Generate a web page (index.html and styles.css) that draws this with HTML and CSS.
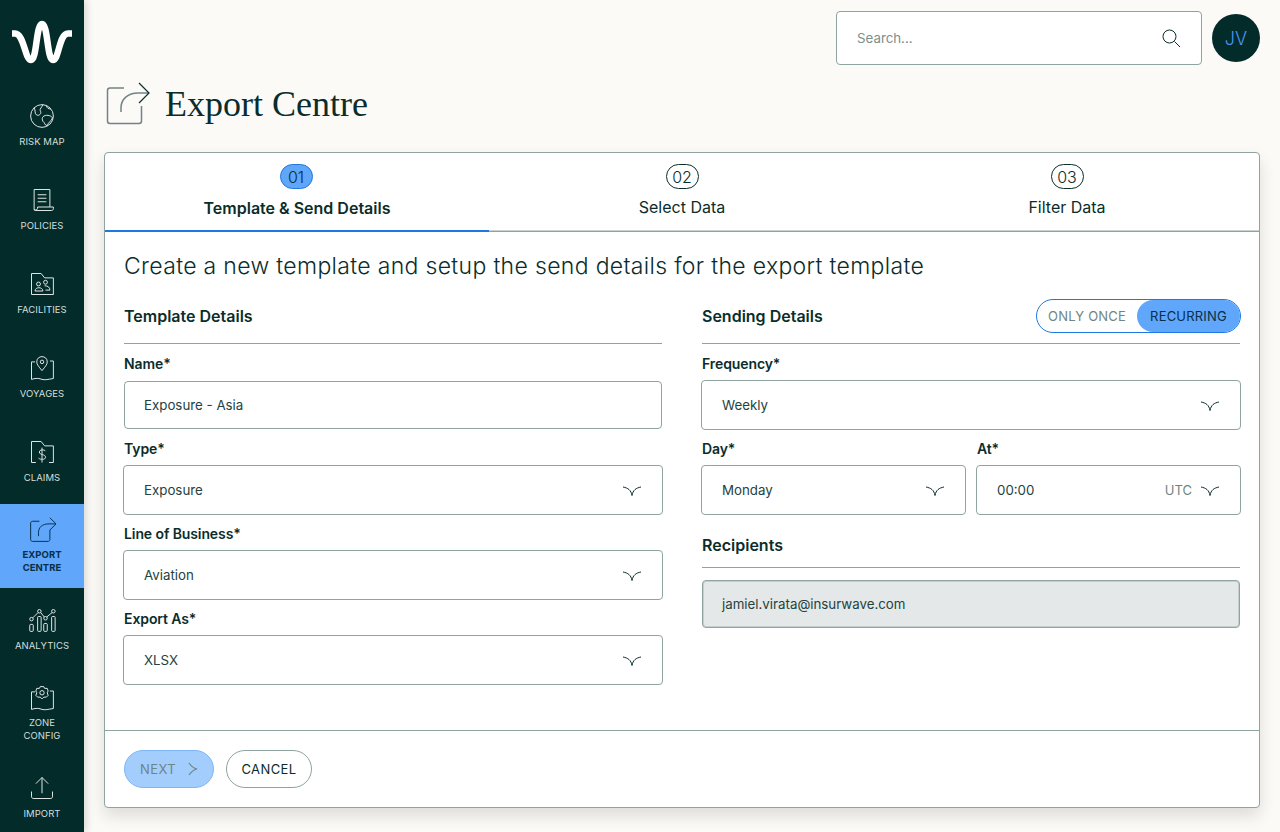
FILE: index.html
```html
<!DOCTYPE html>
<html lang="en">
<head>
    <meta charset="UTF-8">
    <title>Export Centre</title>
    <link rel="stylesheet" href="styles.css">
</head>
<body>
    <aside class="sidebar">
        <div class="logo">
            <svg width="60" height="44" viewBox="0 0 60 44" fill="none"><path d="M0 13.500 H3 C12 13.500 13 40 19 40 C25 40 24 4 30 4 C36 4 35 40 41 40 C47 40 47 13.500 56 13.500 H60" stroke="#fff" stroke-width="6.500"/></svg>
        </div>
        <a class="nav-item">
            <svg class="nav-icon" viewBox="0 0 32 32"><circle cx="16" cy="16" r="13"/><path d="M7 6.500 C9 10 7 13 10 15 C13 16 16 13 14 10 C13 8 16 6 17 3"/><path d="M17 17 C20 14 26 15 28 18 C27 22 23 23 22 27 C19 27 19 23 17 22 C16 20 16 18 17 17Z"/><path d="M21 4 C21 7 24 8 26 8"/></svg>
            <span>Risk Map</span>
        </a>
        <a class="nav-item">
            <svg class="nav-icon" viewBox="0 0 32 32"><path d="M7 27 V4 H25 V24"/><path d="M11 10 H21 M11 14 H21 M11 18 H21"/><path d="M7 27 C10 28 11 27 11 24 H29 V26 C29 27 28 28 27 28 H9 C8 28 7 28 7 27Z"/></svg>
            <span>Policies</span>
        </a>
        <a class="nav-item">
            <svg class="nav-icon" viewBox="0 0 32 32"><path d="M4 4 H15 L19 9 H29 V28 H4Z"/><circle cx="12" cy="16" r="2.200"/><circle cx="20" cy="14" r="2.200"/><path d="M8 24 C8 19 17 19 17 24Z"/><path d="M19 18 C23 18 25 20 25 23 H20"/></svg>
            <span>Facilities</span>
        </a>
        <a class="nav-item">
            <svg class="nav-icon" viewBox="0 0 32 32"><path d="M16 19 C12 14 10 12 10 9 C10 5 13 3 16 3 C19 3 22 5 22 9 C22 12 20 14 16 19Z"/><circle cx="16" cy="9" r="2"/><path d="M8 9 H4 V29 C10 27 13 28 16 29 C19 30 23 29 29 28 V8 H25"/></svg>
            <span>Voyages</span>
        </a>
        <a class="nav-item">
            <svg class="nav-icon" viewBox="0 0 32 32"><path d="M9 28 H4 V4 H15 L19 9 H29 V28 H24"/><path d="M20 15 C19 13 13 13 13 16 C13 20 20 18 20 22 C20 25 14 25 12 23"/><path d="M16 11 V28"/></svg>
            <span>Claims</span>
        </a>
        <a class="nav-item two-line active">
            <svg class="nav-icon" viewBox="0 0 32 32"><path d="M13 6 H5 C4 6 3 7 3 8 V27 C3 28 4 29 5 29 H23 C24 29 25 28 25 27 V16"/><path d="M12 23 V19 C12 13 16 9 24 9 H32"/><path d="M25 2 L32 9 L25 16"/></svg>
            <span>Export Centre</span>
        </a>
        <a class="nav-item">
            <svg class="nav-icon" viewBox="0 0 32 32"><circle cx="4" cy="15" r="2"/><circle cx="13" cy="6" r="2"/><circle cx="20" cy="14" r="2"/><circle cx="29" cy="6" r="2"/><path d="M5.500 13.500 L11.500 7.500 M14.500 7.500 L18.500 12.500 M21.500 12.500 L27.500 7.500"/><rect x="2" y="21" width="4" height="8" rx="1"/><rect x="11" y="12" width="4" height="17" rx="1"/><rect x="18" y="20" width="4" height="9" rx="1"/><rect x="27" y="12" width="4" height="17" rx="1"/></svg>
            <span>Analytics</span>
        </a>
        <a class="nav-item two-line">
            <svg class="nav-icon" viewBox="0 0 32 32"><path d="M8 9 H4 V29 C10 27 13 28 16 29 C19 30 23 29 29 28 V8 H25"/><circle cx="16" cy="10" r="2.500"/><path d="M14 3 H18 L19 5 L22 5 L23 8 L22 10 L23 13 L21 15 L18 15 L16 17 L14 15 L11 15 L9 13 L10 10 L9 8 L10 5 L13 5Z"/></svg>
            <span>Zone Config</span>
        </a>
        <a class="nav-item">
            <svg class="nav-icon" viewBox="0 0 32 32"><path d="M16 22 V4 M9 11 L16 4 L23 11"/><path d="M4 20 V26 C4 27 5 28 6 28 H26 C27 28 28 27 28 26 V20"/></svg>
            <span>Import</span>
        </a>
    </aside>

    <main class="main">
        <header class="topbar">
            <div class="search">
                <span>Search...</span>
                <svg width="20" height="20" viewBox="0 0 20 20" fill="none" stroke="#0a2d2b"><circle cx="8.500" cy="8.500" r="6.500"/><path d="M13.500 13.500 L19 19"/></svg>
            </div>
            <div class="avatar">JV</div>
        </header>

        <div class="page-title">
            <svg width="44" height="44" viewBox="0 0 44 44" fill="none"><path d="M18 6 H4 C2.500 6 1.500 7 1.500 8.500 V39 C1.500 40.500 2.500 41.500 4 41.500 H33 C34.500 41.500 35.500 40.500 35.500 39 V24" stroke="#6f8583" stroke-width="1.500"/><path d="M15 30 V26 C15 17 22 11 32 11 H43" stroke="#6f8583" stroke-width="1.500"/><path d="M33 1 L43 11 L33 21" stroke="#0a2d2b" stroke-width="1.200"/></svg>
            <h1>Export Centre</h1>
        </div>

        <section class="card">
            <nav class="tabs">
                <div class="tab current"><span class="pill">01</span><span class="tab-label">Template &amp; Send Details</span></div>
                <div class="tab"><span class="pill">02</span><span class="tab-label">Select Data</span></div>
                <div class="tab"><span class="pill">03</span><span class="tab-label">Filter Data</span></div>
            </nav>

            <div class="card-body">
                <h2>Create a new template and setup the send details for the export template</h2>
                <div class="columns">
                    <div class="col">
                        <div class="section-head"><h3>Template Details</h3></div>
                        <div class="field">
                            <label>Name*</label>
                            <div class="box plain">Exposure - Asia</div>
                        </div>
                        <div class="field">
                            <label>Type*</label>
                            <div class="box">Exposure
                                <svg class="chev" viewBox="0 0 18 11"><path d="M0 2 C5 3 8 5 9 10.500 C10 5 13 3 18 2"/></svg>
                            </div>
                        </div>
                        <div class="field">
                            <label>Line of Business*</label>
                            <div class="box">Aviation
                                <svg class="chev" viewBox="0 0 18 11"><path d="M0 2 C5 3 8 5 9 10.500 C10 5 13 3 18 2"/></svg>
                            </div>
                        </div>
                        <div class="field">
                            <label>Export As*</label>
                            <div class="box">XLSX
                                <svg class="chev" viewBox="0 0 18 11"><path d="M0 2 C5 3 8 5 9 10.500 C10 5 13 3 18 2"/></svg>
                            </div>
                        </div>
                    </div>

                    <div class="col">
                        <div class="section-head">
                            <h3>Sending Details</h3>
                            <div class="toggle">
                                <span class="opt">ONLY ONCE</span>
                                <span class="opt on">RECURRING</span>
                            </div>
                        </div>
                        <div class="field">
                            <label>Frequency*</label>
                            <div class="box">Weekly
                                <svg class="chev" viewBox="0 0 18 11"><path d="M0 2 C5 3 8 5 9 10.500 C10 5 13 3 18 2"/></svg>
                            </div>
                        </div>
                        <div class="field-row">
                            <div class="field">
                                <label>Day*</label>
                                <div class="box">Monday
                                    <svg class="chev" viewBox="0 0 18 11"><path d="M0 2 C5 3 8 5 9 10.500 C10 5 13 3 18 2"/></svg>
                                </div>
                            </div>
                            <div class="field">
                                <label>At*</label>
                                <div class="box">00:00
                                    <span class="utc">UTC</span>
                                    <svg class="chev" viewBox="0 0 18 11"><path d="M0 2 C5 3 8 5 9 10.500 C10 5 13 3 18 2"/></svg>
                                </div>
                            </div>
                        </div>
                        <div class="section-head recipients"><h3>Recipients</h3></div>
                        <div class="box plain locked">jamiel.virata@insurwave.com</div>
                    </div>
                </div>
            </div>

            <footer class="card-footer">
                <button class="btn btn-next">NEXT
                    <svg width="10" height="14" viewBox="0 0 10 14" fill="none" stroke="#6f8583" stroke-width="1.200"><path d="M1 1 C3 4 5 6 9 7 C5 8 3 10 1 13"/></svg>
                </button>
                <button class="btn btn-cancel">CANCEL</button>
            </footer>
        </section>
    </main>
</body>
</html>
```

FILE: styles.css
```css
* {
    box-sizing: border-box;
}
body {
    margin: 0;
    height: 832px;
    overflow: hidden;
    display: flex;
    background: #fcfaf7;
    color: #0a2d2b;
    font-family: Inter, "Noto Sans", sans-serif;
}
.sidebar {
    width: 84px;
    height: 832px;
    flex-shrink: 0;
    overflow: hidden;
    background: #032b29;
    box-shadow: 2px 0 8px rgba(0,0,0,0.15);
}
.logo {
    height: 84px;
    padding: 20px 0 0 12px;
}
.logo svg {
    display: block;
}
.nav-item {
    height: 84px;
    padding-bottom: 2px;
    display: flex;
    flex-direction: column;
    align-items: center;
    justify-content: center;
    gap: 5px;
    color: #d5dedd;
    font-size: 9.500px;
    line-height: 13px;
    letter-spacing: 0.05px;
    text-align: center;
    text-transform: uppercase;
}
.nav-item span {
    width: 60px;
}
.nav-item.two-line span {
    margin-top: -1px;
}
.nav-icon {
    width: 28px;
    height: 28px;
    fill: none;
    stroke: #e6ecea;
    stroke-width: 1.100;
}
.nav-item.active {
    background: #60a6fb;
    color: #06304a;
    font-weight: 700;
}
.nav-item.active .nav-icon {
    stroke: #06304a;
}
.main {
    flex: 1;
    padding: 11px 20px 24px;
    min-width: 0;
}
.topbar {
    display: flex;
    justify-content: flex-end;
    align-items: center;
    gap: 10px;
    height: 54px;
}
.search {
    width: 366px;
    height: 54px;
    padding: 0 20px;
    display: flex;
    align-items: center;
    justify-content: space-between;
    background: #fff;
    border: 1px solid #8fa3a1;
    border-radius: 4px;
    color: #7b8f8d;
    font-size: 13.300px;
}
.avatar {
    width: 48px;
    height: 48px;
    border-radius: 50%;
    display: flex;
    align-items: center;
    justify-content: center;
    background: #032b29;
    color: #4a96f0;
    font-size: 18px;
    font-weight: 300;
}
.page-title {
    display: flex;
    align-items: center;
    gap: 15px;
    height: 44px;
    margin: 17px 0 26px 2px;
}
h1 {
    margin: 0;
    font-family: "Liberation Serif", serif;
    font-weight: 400;
    font-size: 36px;
    color: #0a2d2b;
}
.card {
    height: 656px;
    display: flex;
    flex-direction: column;
    background: #fff;
    border: 1px solid #8fa3a1;
    border-radius: 4px;
    box-shadow: 0 8px 16px rgba(0,0,0,0.12);
}
.tabs {
    display: grid;
    grid-template-columns: 384px 386px 384px;
    height: 79px;
    border-bottom: 1px solid #8fa3a1;
}
.tab {
    height: 78px;
    padding-top: 11px;
    display: flex;
    flex-direction: column;
    align-items: center;
    gap: 8px;
    border-bottom: 1px solid #c9d2d1;
}
.tab.current {
    border-bottom: 2px solid #1f78e0;
    height: 79px;
}
.pill {
    width: 33px;
    height: 25px;
    border: 1px solid #0a2d2b;
    border-radius: 13px;
    display: flex;
    align-items: center;
    justify-content: center;
    font-size: 16px;
    font-weight: 300;
}
.tab.current .pill {
    margin-right: 2px;
    background: #60a6fb;
    border-color: #1f78e0;
}
.tab-label {
    font-size: 16px;
    line-height: 20px;
}
.tab.current .tab-label {
    font-weight: 600;
    margin-top: 1px;
}
.card-body {
    flex: 1;
    padding: 20px 19px 0;
}
h2 {
    margin: 0;
    font-size: 23px;
    font-weight: 300;
    line-height: 28px;
    letter-spacing: 0.33px;
}
.columns {
    display: grid;
    grid-template-columns: 538px 538px;
    gap: 40px;
    margin-top: 20px;
}
.section-head {
    height: 44px;
    padding-bottom: 11px;
    display: flex;
    align-items: center;
    justify-content: space-between;
    border-bottom: 1px solid #8fa3a1;
}
h3 {
    margin: 0;
    font-size: 16px;
    font-weight: 600;
}
.toggle {
    display: flex;
    width: 205px;
    height: 34px;
    margin: -1px -1px 0 0;
    align-self: flex-start;
    border: 1px solid #1f78e0;
    border-radius: 17px;
    font-size: 13px;
    letter-spacing: 0.2px;
}
.opt {
    flex: 1;
    display: flex;
    align-items: center;
    justify-content: center;
    color: #6f8583;
}
.opt.on {
    flex: 0 0 103px;
    background: #60a6fb;
    border-radius: 16px;
    color: #06304a;
}
.field {
    display: flex;
    flex-direction: column;
    margin-top: 10px;
    margin-bottom: -1px;
}
label {
    display: block;
    height: 20px;
    margin-bottom: 6px;
    font-size: 14px;
    line-height: 20px;
    font-weight: 600;
    letter-spacing: -0.1px;
}
.box {
    height: 50px;
    margin: 0 -1px;
    padding: 0 21px 0 20px;
    display: flex;
    align-items: center;
    background: #fff;
    border: 1px solid #8fa3a1;
    border-radius: 4px;
    font-size: 13.300px;
    color: #24423f;
}
.box.plain {
    height: 48px;
    margin: 1px 0;
    padding-left: 19px;
}
.box.locked {
    background: #e4e8e8;
    margin-top: 12px;
    box-shadow: inset 0 0 0 1px #c5cfce;
}
.chev {
    width: 18px;
    height: 11px;
    margin-left: auto;
    fill: none;
    stroke: #0a2d2b;
}
.utc {
    margin-left: auto;
    color: #6f8583;
    font-size: 13px;
}
.utc + .chev {
    margin-left: 9px;
}
.field-row {
    display: grid;
    grid-template-columns: 1fr 1fr;
    gap: 12px;
}
.recipients {
    height: 42px;
    margin-top: 12px;
    padding-bottom: 0;
}
.recipients h3 {
    padding-bottom: 3px;
}
.card-footer {
    height: 77px;
    padding: 19px 19px 0;
    display: flex;
    gap: 12px;
    border-top: 1px solid #8fa3a1;
}
.btn {
    height: 38px;
    border-radius: 19px;
    display: flex;
    align-items: center;
    justify-content: center;
    gap: 12px;
    font-family: Inter, sans-serif;
    font-size: 13px;
    letter-spacing: 0.4px;
}
.btn-next {
    width: 90px;
    background: #a3cdfd;
    border: 1px solid #7db6f8;
    color: #6f8583;
}
.btn-cancel {
    width: 86px;
    background: #fff;
    border: 1px solid #8fa3a1;
    color: #0a2d2b;
}
```
